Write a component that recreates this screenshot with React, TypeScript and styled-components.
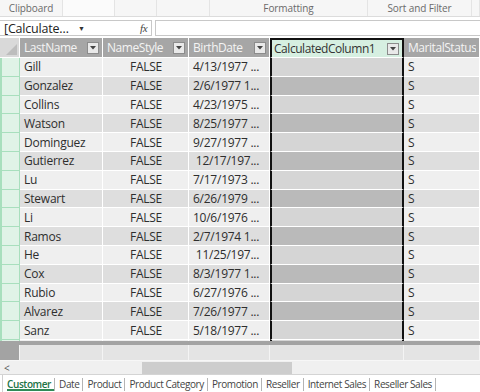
import React from "react";
import styled, { createGlobalStyle, css } from "styled-components";

const GlobalStyle = createGlobalStyle`
  html, body { margin: 0; padding: 0; background: #fff; }
  body { font-family: "Open Sans", "Noto Sans", sans-serif; }
  * { box-sizing: border-box; }
`;

const Frame = styled.div`
  width: 480px;
  height: 392px;
  overflow: hidden;
  display: flex;
  flex-direction: column;
  background: #fff;
`;

const Ribbon = styled.div`
  height: 17px;
  display: flex;
  background: #f6f6f6;
  border-bottom: 1px solid #dcdcdc;
  flex: none;
`;

const RibbonGroup = styled.div<{ $w: number; $light?: boolean }>`
  width: ${(p) => p.$w}px;
  flex: none;
  display: flex;
  align-items: flex-end;
  justify-content: center;
  font-size: 10px;
  letter-spacing: -0.1px;
  color: #6a6a6a;
  border-right: 1px solid #e4e4e4;
  background: ${(p) => (p.$light ? "#fbfbfb" : "transparent")};
  padding-bottom: 1px;
`;

const FormulaBar = styled.div`
  height: 21px;
  flex: none;
  display: flex;
  align-items: flex-start;
  padding-top: 3px;
  gap: 3px;
  background: #fff;
`;

const NameBox = styled.div`
  width: 152px;
  height: 16px;
  border: 1px solid #c8c8c8;
  border-left: none;
  display: flex;
  align-items: center;
  padding-left: 4px;
  font-size: 12.5px;
  letter-spacing: -0.2px;
  color: #222;
`;

const NameText = styled.span`
  width: 74px;
`;

const Caret = styled.span`
  font-size: 7px;
  color: #333;
  width: 62px;
`;

const Fx = styled.span`
  font-family: "Liberation Serif", serif;
  font-style: italic;
  font-size: 11px;
  color: #444;
`;

const FormulaInput = styled.div`
  flex: 1;
  height: 16px;
  border: 1px solid #c8c8c8;
  border-right: none;
`;

const Grid = styled.div`
  display: flex;
  flex-direction: column;
  flex: none;
  height: 303px;
  background: #fff;
`;

const Row = styled.div<{ $h: number }>`
  display: flex;
  height: ${(p) => p.$h}px;
  flex: none;
`;

const colWidths = [20, 83, 86, 81, 134, 76];

const Corner = styled.div`
  width: 20px;
  flex: none;
  background: #d9d9d9;
  border-right: 1px solid #fff;
  border-bottom: 1px solid #fff;
  display: flex;
  align-items: flex-end;
  justify-content: flex-end;
  padding: 0 2px 2px 0;
`;

const HeaderCell = styled.div<{ $w: number; $sel?: boolean }>`
  width: ${(p) => p.$w}px;
  flex: none;
  display: flex;
  align-items: center;
  padding: 0 3px 0 4px;
  font-size: 12px;
  letter-spacing: -0.45px;
  white-space: nowrap;
  overflow: hidden;
  border-right: 1px solid #fff;
  border-bottom: 1px solid #fff;
  background: #a6a6a6;
  color: #f4f4f4;
  ${(p) =>
    p.$sel &&
    css`
      background: #d6efe1;
      color: #333;
      border-top: 2px solid #111;
      border-left: 2px solid #111;
      border-right: 2px solid #111;
      padding-left: 2px;
    `}
`;

const HeaderLabel = styled.span`
  flex: 1;
  overflow: hidden;
`;

const FilterBtn = styled.span`
  width: 12px;
  height: 12px;
  flex: none;
  background: #e9e9e9;
  border: 1px solid #8c8c8c;
  display: flex;
  align-items: center;
  justify-content: center;
`;

const RowHead = styled.div`
  width: 20px;
  flex: none;
  background: #e0f3e7;
  border-left: 2px solid #a8dfbd;
  border-right: 1px solid #a8dfbd;
  border-bottom: 1px solid #a8dfbd;
`;

const Cell = styled.div<{
  $w: number;
  $dark: boolean;
  $align?: "left" | "center";
  $sel?: boolean;
}>`
  width: ${(p) => p.$w}px;
  flex: none;
  display: flex;
  align-items: center;
  justify-content: ${(p) => (p.$align === "center" ? "center" : "flex-start")};
  padding: 0 3px 0 4px;
  font-size: 12px;
  letter-spacing: -0.25px;
  color: #2e2e2e;
  white-space: pre;
  overflow: hidden;
  border-right: 1px solid #fff;
  border-bottom: 1px solid #fff;
  background: ${(p) => (p.$dark ? "#dedede" : "#efefef")};
  ${(p) =>
    p.$sel &&
    css`
      background: ${p.$dark ? "#bababa" : "#d5d5d5"};
      border-left: 2px solid #111;
      border-right: 2px solid #111;
    `}
`;

const GridTail = styled.div`
  display: flex;
  flex: 1;
`;

const TailCell = styled.div<{ $w: number; $sel?: boolean; $head?: boolean }>`
  width: ${(p) => p.$w}px;
  flex: none;
  background: ${(p) => (p.$head ? "#e0f3e7" : "#efefef")};
  border-right: 1px solid #fff;
  ${(p) =>
    p.$head &&
    css`
      border-left: 2px solid #a8dfbd;
      border-right: 1px solid #a8dfbd;
    `}
  ${(p) =>
    p.$sel &&
    css`
      background: #d5d5d5;
      border-left: 2px solid #111;
      border-right: 2px solid #111;
    `}
`;

const ThickSep = styled.div`
  height: 4px;
  flex: none;
  background: #a3a3a3;
`;

const TotalsRow = styled.div`
  height: 15px;
  flex: none;
  display: flex;
  background: #e6e6e6;
`;

const TotalsCell = styled.div<{ $w: number; $dark?: boolean }>`
  width: ${(p) => p.$w}px;
  flex: none;
  background: ${(p) => (p.$dark ? "#a3a3a3" : "#e4e4e4")};
  border-right: 1px solid #f4f4f4;
`;

const ScrollBar = styled.div`
  height: 14px;
  flex: none;
  display: flex;
  align-items: center;
  background: #f0f0f0;
  border-top: 1px solid #f7f7f7;
`;

const ScrollArrow = styled.span`
  width: 142px;
  flex: none;
  font-size: 10px;
  color: #555;
  padding-left: 4px;
  line-height: 12px;
`;

const ScrollThumb = styled.div`
  width: 150px;
  height: 12px;
  background: #cdcdcd;
`;

const TabBar = styled.div`
  height: 19px;
  flex: none;
  display: flex;
  align-items: stretch;
  background: #fff;
  border-top: 1px solid #d4d4d4;
  padding-left: 2px;
`;

const Tab = styled.div<{ $active?: boolean }>`
  display: flex;
  align-items: center;
  padding: 0 4px 1px 4px;
  font-size: 10px;
  letter-spacing: -0.4px;
  color: #444;
  white-space: nowrap;
  position: relative;
  &::after {
    content: "";
    position: absolute;
    right: 0;
    top: 3px;
    bottom: 2px;
    width: 1px;
    background: #b4b4b4;
  }
  ${(p) =>
    p.$active &&
    css`
      color: #217346;
      font-weight: 600;
      border-left: 1px solid #d0d0d0;
      padding-left: 4px;
      &::before {
        content: "";
        position: absolute;
        left: 4px;
        right: 1px;
        bottom: 2px;
        height: 2px;
        background: #2f8a57;
      }
    `}
`;

const Tri = () => (
  <svg width="11" height="11" viewBox="0 0 11 11">
    <polygon points="11,0 11,11 0,11" fill="#bdbdbd" />
  </svg>
);

const DownArrow = () => (
  <svg width="6" height="4" viewBox="0 0 6 4">
    <polygon points="0,0 6,0 3,3.5" fill="#444" />
  </svg>
);

const rows: [string, string][] = [
  ["Gill", "4/13/1977 ..."],
  ["Gonzalez", "2/6/1977 1..."],
  ["Collins", "4/23/1975 ..."],
  ["Watson", "8/25/1977 ..."],
  ["Dominguez", "9/27/1977 ..."],
  ["Gutierrez", " 12/17/197..."],
  ["Lu", "7/17/1973 ..."],
  ["Stewart", "6/26/1979 ..."],
  ["Li", "10/6/1976 ..."],
  ["Ramos", "2/7/1974 1..."],
  ["He", " 11/25/197..."],
  ["Cox", "8/3/1977 1..."],
  ["Rubio", "6/27/1976 ..."],
  ["Alvarez", "7/26/1977 ..."],
  ["Sanz", "5/18/1977 ..."],
];

const headers = ["LastName", "NameStyle", "BirthDate", "CalculatedColumn1", "MaritalStatus"];

const tabs = [
  "Customer",
  "Date",
  "Product",
  "Product Category",
  "Promotion",
  "Reseller",
  "Internet Sales",
  "Reseller Sales",
];

export default function App() {
  return (
    <Frame>
      <GlobalStyle />
      <Ribbon>
        <RibbonGroup $w={63}>Clipboard</RibbonGroup>
        <RibbonGroup $w={52} $light />
        <RibbonGroup $w={42} />
        <RibbonGroup $w={53} />
        <RibbonGroup $w={158}>Formatting</RibbonGroup>
        <RibbonGroup $w={104}>Sort and Filter</RibbonGroup>
        <RibbonGroup $w={8} />
      </Ribbon>
      <FormulaBar>
        <NameBox>
          <NameText>[Calculate…</NameText>
          <Caret>▼</Caret>
          <Fx>fx</Fx>
        </NameBox>
        <FormulaInput />
      </FormulaBar>
      <Grid>
        <Row $h={20}>
          <Corner>
            <Tri />
          </Corner>
          {headers.map((h, i) => (
            <HeaderCell key={h} $w={colWidths[i + 1]} $sel={i === 3}>
              <HeaderLabel>{h}</HeaderLabel>
              {i < 4 && (
                <FilterBtn>
                  <DownArrow />
                </FilterBtn>
              )}
            </HeaderCell>
          ))}
        </Row>
        {rows.map(([name, date], r) => {
          const dark = r % 2 === 1;
          return (
            <Row key={name} $h={18.8}>
              <RowHead />
              <Cell $w={colWidths[1]} $dark={dark}>
                {name}
              </Cell>
              <Cell $w={colWidths[2]} $dark={dark} $align="center">
                FALSE
              </Cell>
              <Cell $w={colWidths[3]} $dark={dark}>
                {date}
              </Cell>
              <Cell $w={colWidths[4]} $dark={dark} $sel />
              <Cell $w={colWidths[5]} $dark={dark}>
                S
              </Cell>
            </Row>
          );
        })}
        <GridTail>
          {colWidths.map((w, i) => (
            <TailCell key={i} $w={w} $head={i === 0} $sel={i === 4} />
          ))}
        </GridTail>
      </Grid>
      <ThickSep />
      <TotalsRow>
        {colWidths.map((w, i) => (
          <TotalsCell key={i} $w={w} $dark={i === 0} />
        ))}
      </TotalsRow>
      <ScrollBar>
        <ScrollArrow>&lt;</ScrollArrow>
        <ScrollThumb />
      </ScrollBar>
      <TabBar>
        {tabs.map((t, i) => (
          <Tab key={t} $active={i === 0}>
            {t}
          </Tab>
        ))}
      </TabBar>
    </Frame>
  );
}
